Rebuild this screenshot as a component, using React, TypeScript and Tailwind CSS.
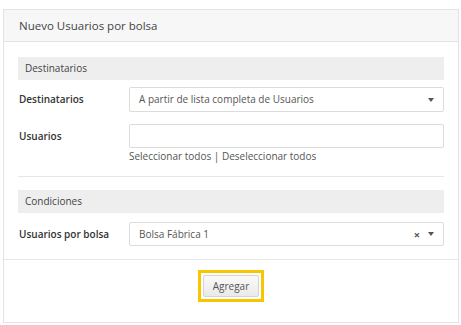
import React from "react";

const Caret = () => (
  <span className="ml-2 inline-block w-0 h-0 border-l-[3.5px] border-r-[3.5px] border-t-[4px] border-l-transparent border-r-transparent border-t-[#555]" />
);

const SectionBar = ({ title }: { title: string }) => (
  <div className="h-[23px] bg-[#eeeeee] flex items-center px-[7px] text-[10px] text-[#444]">{title}</div>
);

export default function App() {
  return (
    <div className="w-[461px] h-[325px] bg-white pt-[9px] pl-[3px] font-['Open_Sans',sans-serif]">
      <div className="w-[456px] h-[314px] border border-[#e3e3e3] flex flex-col">
        <div className="h-[32px] bg-[#f7f7f7] border-b border-[#e3e3e3] flex items-center px-[15px] text-[11.5px] text-[#444]">
          Nuevo Usuarios por bolsa
        </div>
        <div className="px-[14px] pt-[15px] pb-[13px] border-b border-[#e6e6e6]">
          <SectionBar title="Destinatarios" />
          <div className="flex items-center mt-[7px]">
            <div className="w-[111px] pl-[1px] text-[10px] font-semibold text-[#333]">Destinatarios</div>
            <div className="flex-1 h-[25px] border border-[#dcdcdc] rounded-[2px] flex items-center px-[9px] text-[10px] text-[#555]">
              <span className="flex-1">A partir de lista completa de Usuarios</span>
              <Caret />
            </div>
          </div>
          <div className="flex mt-[12px]">
            <div className="w-[111px] pl-[1px] h-[24px] flex items-center text-[10px] font-semibold text-[#333]">Usuarios</div>
            <div className="flex-1">
              <div className="h-[24px] border border-[#dcdcdc] rounded-[2px]" />
              <div className="mt-[1px] text-[10px] text-[#555] leading-[14px]">Seleccionar todos | Deseleccionar todos</div>
            </div>
          </div>
          <div className="mt-[13px] border-t border-[#e6e6e6]" />
          <div className="mt-[13px]">
            <SectionBar title="Condiciones" />
          </div>
          <div className="flex items-center mt-[9px]">
            <div className="w-[111px] pl-[1px] text-[10px] font-semibold text-[#333]">Usuarios por bolsa</div>
            <div className="flex-1 h-[24px] border border-[#dcdcdc] rounded-[2px] flex items-center px-[9px] text-[10px] text-[#555]">
              <span className="flex-1">Bolsa Fábrica 1</span>
              <span className="text-[11px] text-[#555] font-bold leading-none">×</span>
              <Caret />
            </div>
          </div>
        </div>
        <div className="flex justify-center pt-[10px]">
          <div className="border-[3px] border-[#f7c600] p-[2px] bg-white">
            <button className="block w-[56px] h-[22px] bg-gradient-to-b from-[#fafafa] to-[#eaeaea] border border-[#d4d4d4] rounded-[2px] text-[10px] text-[#555]">
              Agregar
            </button>
          </div>
        </div>
      </div>
    </div>
  );
}
